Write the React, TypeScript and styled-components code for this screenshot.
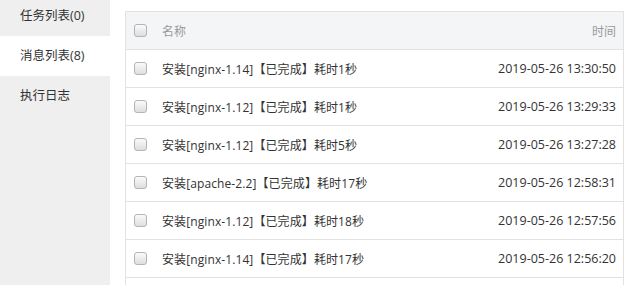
import React from "react";
import styled, { createGlobalStyle } from "styled-components";

const GlobalStyle = createGlobalStyle`
  html, body {
    margin: 0;
    padding: 0;
    background: #fff;
    font-family: "Open Sans", "Noto Sans CJK SC", sans-serif;
    font-size: 12px;
    color: #333;
    overflow: hidden;
  }
`;

const Page = styled.div`
  display: flex;
  height: 285px;
  width: 638px;
`;

const Side = styled.div`
  width: 110px;
  flex: none;
  background: #efefef;
  margin-top: -4px;
`;

const SideItem = styled.div<{ $active?: boolean }>`
  height: 40px;
  line-height: 40px;
  padding-left: 20px;
  font-size: 12.5px;
  color: #333;
  background: ${(p) => (p.$active ? "#fff" : "transparent")};
`;

const Main = styled.div`
  flex: 1;
  display: flex;
  flex-direction: column;
  padding: 11px 14px 0 15px;
`;

const Table = styled.div`
  flex: 1;
  border: 1px solid #e2e2e2;
  border-bottom: none;
`;

const Row = styled.div<{ $head?: boolean }>`
  display: flex;
  align-items: center;
  height: 37px;
  border-bottom: 1px solid #e2e2e2;
  background: ${(p) => (p.$head ? "#f4f5f7" : "#fff")};
  color: ${(p) => (p.$head ? "#999" : "#333")};
  padding: 0 7px 0 8px;
`;

const Check = styled.span`
  width: 11px;
  height: 11px;
  border: 1px solid #b4b4b4;
  border-radius: 3px;
  background: linear-gradient(#fafafa, #dedede);
  flex: none;
`;

const Name = styled.div`
  flex: 1;
  padding-left: 15px;
  white-space: nowrap;
  letter-spacing: 0.1px;
`;

const Time = styled.div<{ $head?: boolean }>`
  white-space: nowrap;
  text-align: right;
  font-size: ${(p) => (p.$head ? "12px" : "12.5px")};
`;

const rows = [
  ["安装[nginx-1.14]【已完成】耗时1秒", "2019-05-26 13:30:50"],
  ["安装[nginx-1.12]【已完成】耗时1秒", "2019-05-26 13:29:33"],
  ["安装[nginx-1.12]【已完成】耗时5秒", "2019-05-26 13:27:28"],
  ["安装[apache-2.2]【已完成】耗时17秒", "2019-05-26 12:58:31"],
  ["安装[nginx-1.12]【已完成】耗时18秒", "2019-05-26 12:57:56"],
  ["安装[nginx-1.14]【已完成】耗时17秒", "2019-05-26 12:56:20"],
];

export default function App() {
  return (
    <Page>
      <GlobalStyle />
      <Side>
        <SideItem>任务列表(0)</SideItem>
        <SideItem $active>消息列表(8)</SideItem>
        <SideItem>执行日志</SideItem>
      </Side>
      <Main>
        <Table>
          <Row $head>
            <Check />
            <Name>名称</Name>
            <Time $head>时间</Time>
          </Row>
          {rows.map(([n, t], i) => (
            <Row key={i}>
              <Check />
              <Name>{n}</Name>
              <Time>{t}</Time>
            </Row>
          ))}
        </Table>
      </Main>
    </Page>
  );
}
